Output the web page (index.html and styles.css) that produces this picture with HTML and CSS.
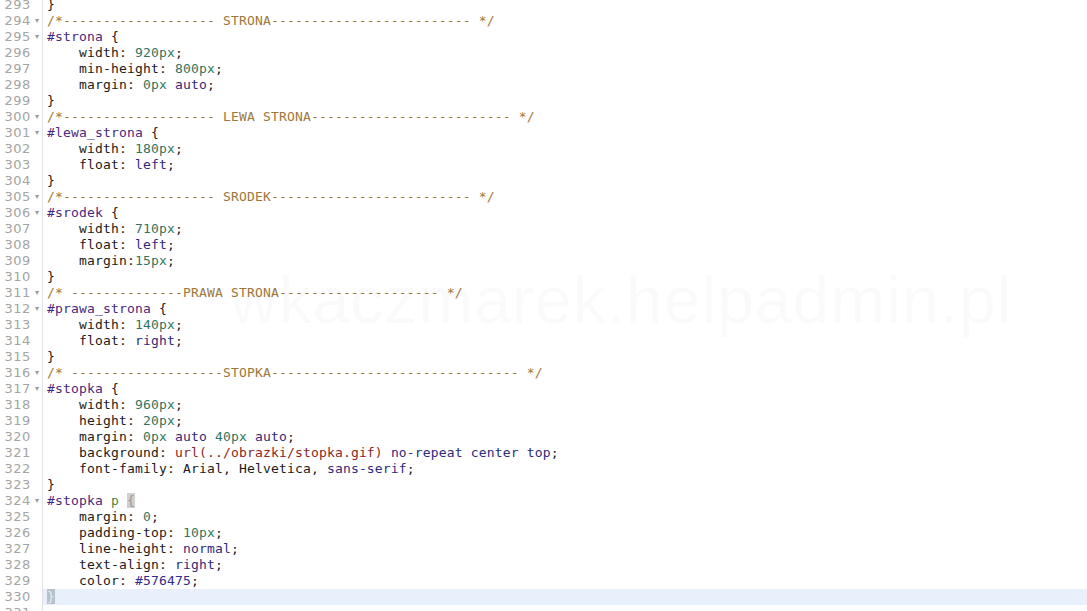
FILE: index.html
```html
<!DOCTYPE html>
<html>
<head>
<meta charset="utf-8">
<link rel="stylesheet" href="styles.css">
</head>
<body>
<div class="editor">
  <div class="line"><span class="num">293</span><span class="fold"></span><span class="code">}</span></div>
  <div class="line"><span class="num">294</span><span class="fold">▾</span><span class="code"><span class="cm">/*------------------- STRONA------------------------- */</span></span></div>
  <div class="line"><span class="num">295</span><span class="fold">▾</span><span class="code"><span class="sel">#strona</span> {</span></div>
  <div class="line"><span class="num">296</span><span class="fold"></span><span class="code">    width: <span class="n">920px</span>;</span></div>
  <div class="line"><span class="num">297</span><span class="fold"></span><span class="code">    min-height: <span class="n">800px</span>;</span></div>
  <div class="line"><span class="num">298</span><span class="fold"></span><span class="code">    margin: <span class="n">0px</span> <span class="kw">auto</span>;</span></div>
  <div class="line"><span class="num">299</span><span class="fold"></span><span class="code">}</span></div>
  <div class="line"><span class="num">300</span><span class="fold">▾</span><span class="code"><span class="cm">/*------------------- LEWA STRONA------------------------- */</span></span></div>
  <div class="line"><span class="num">301</span><span class="fold">▾</span><span class="code"><span class="sel">#lewa_strona</span> {</span></div>
  <div class="line"><span class="num">302</span><span class="fold"></span><span class="code">    width: <span class="n">180px</span>;</span></div>
  <div class="line"><span class="num">303</span><span class="fold"></span><span class="code">    float: <span class="kw">left</span>;</span></div>
  <div class="line"><span class="num">304</span><span class="fold"></span><span class="code">}</span></div>
  <div class="line"><span class="num">305</span><span class="fold">▾</span><span class="code"><span class="cm">/*------------------- SRODEK------------------------- */</span></span></div>
  <div class="line"><span class="num">306</span><span class="fold">▾</span><span class="code"><span class="sel">#srodek</span> {</span></div>
  <div class="line"><span class="num">307</span><span class="fold"></span><span class="code">    width: <span class="n">710px</span>;</span></div>
  <div class="line"><span class="num">308</span><span class="fold"></span><span class="code">    float: <span class="kw">left</span>;</span></div>
  <div class="line"><span class="num">309</span><span class="fold"></span><span class="code">    margin:<span class="n">15px</span>;</span></div>
  <div class="line"><span class="num">310</span><span class="fold"></span><span class="code">}</span></div>
  <div class="line"><span class="num">311</span><span class="fold">▾</span><span class="code"><span class="cm">/* --------------PRAWA STRONA-------------------- */</span></span></div>
  <div class="line"><span class="num">312</span><span class="fold">▾</span><span class="code"><span class="sel">#prawa_strona</span> {</span></div>
  <div class="line"><span class="num">313</span><span class="fold"></span><span class="code">    width: <span class="n">140px</span>;</span></div>
  <div class="line"><span class="num">314</span><span class="fold"></span><span class="code">    float: <span class="kw">right</span>;</span></div>
  <div class="line"><span class="num">315</span><span class="fold"></span><span class="code">}</span></div>
  <div class="line"><span class="num">316</span><span class="fold">▾</span><span class="code"><span class="cm">/* -------------------STOPKA------------------------------- */</span></span></div>
  <div class="line"><span class="num">317</span><span class="fold">▾</span><span class="code"><span class="sel">#stopka</span> {</span></div>
  <div class="line"><span class="num">318</span><span class="fold"></span><span class="code">    width: <span class="n">960px</span>;</span></div>
  <div class="line"><span class="num">319</span><span class="fold"></span><span class="code">    height: <span class="n">20px</span>;</span></div>
  <div class="line"><span class="num">320</span><span class="fold"></span><span class="code">    margin: <span class="n">0px</span> <span class="kw">auto</span> <span class="n">40px</span> <span class="kw">auto</span>;</span></div>
  <div class="line"><span class="num">321</span><span class="fold"></span><span class="code">    background: <span class="url">url(../obrazki/stopka.gif)</span> <span class="kw">no-repeat center top</span>;</span></div>
  <div class="line"><span class="num">322</span><span class="fold"></span><span class="code">    font-family: Arial, Helvetica, <span class="kw">sans-serif</span>;</span></div>
  <div class="line"><span class="num">323</span><span class="fold"></span><span class="code">}</span></div>
  <div class="line"><span class="num">324</span><span class="fold">▾</span><span class="code"><span class="sel">#stopka</span> <span class="tag">p</span> <span class="match">{</span></span></div>
  <div class="line"><span class="num">325</span><span class="fold"></span><span class="code">    margin: <span class="n">0</span>;</span></div>
  <div class="line"><span class="num">326</span><span class="fold"></span><span class="code">    padding-top: <span class="n">10px</span>;</span></div>
  <div class="line"><span class="num">327</span><span class="fold"></span><span class="code">    line-height: <span class="kw">normal</span>;</span></div>
  <div class="line"><span class="num">328</span><span class="fold"></span><span class="code">    text-align: <span class="kw">right</span>;</span></div>
  <div class="line"><span class="num">329</span><span class="fold"></span><span class="code">    color: <span class="hex">#576475</span>;</span></div>
  <div class="line current"><span class="num">330</span><span class="fold"></span><span class="code"><span class="match2">}</span></span></div>
  <div class="line"><span class="num">331</span><span class="fold"></span><span class="code"></span></div>
</div>
<div class="watermark">wkaczmarek.helpadmin.pl</div>
</body>
</html>
```
FILE: styles.css
```css
html, body {
  margin: 0;
  padding: 0;
  background: #ffffff;
  overflow: hidden;
}
body {
  width: 1087px;
  height: 611px;
  position: relative;
}
.editor {
  display: flex;
  flex-direction: column;
  margin-top: -3px;
}
.line {
  display: flex;
  height: 16px;
  line-height: 16px;
}
.num {
  width: 31px;
  text-align: right;
  font-family: "DejaVu Sans", sans-serif;
  font-size: 13px;
  letter-spacing: 0.6px;
  color: #a4a4a4;
  flex: none;
}
.fold {
  width: 11px;
  flex: none;
  font-family: "DejaVu Sans", sans-serif;
  font-size: 8px;
  color: #9a9a9a;
  text-align: center;
  padding-left: 1px;
  box-sizing: border-box;
}
.code {
  flex: 1;
  border-left: 1px solid #e2e2e2;
  padding-left: 4px;
  white-space: pre;
  font-family: "DejaVu Sans Mono", monospace;
  font-size: 13px;
  letter-spacing: 0.17px;
  color: #1a1a1a;
}
.current .code {
  background: #e8f0fb;
}
.cm { color: #a0763a; }
.sel { color: #48287f; }
.n { color: #2f7462; }
.kw { color: #2d2b7a; }
.url { color: #8a2626; }
.hex { color: #2e2c8c; }
.tag { color: #3a8a3a; }
.match {
  background: #cfcfcf;
  color: #9a9a9a;
}
.match2 {
  background: #b8c0c8;
  color: #e6ecf2;
}
.watermark {
  position: absolute;
  left: 230px;
  top: 262px;
  font-family: "Liberation Sans", Arial, sans-serif;
  font-size: 66px;
  letter-spacing: 1px;
  color: rgba(0, 0, 0, 0.018);
  white-space: nowrap;
  pointer-events: none;
}
```
